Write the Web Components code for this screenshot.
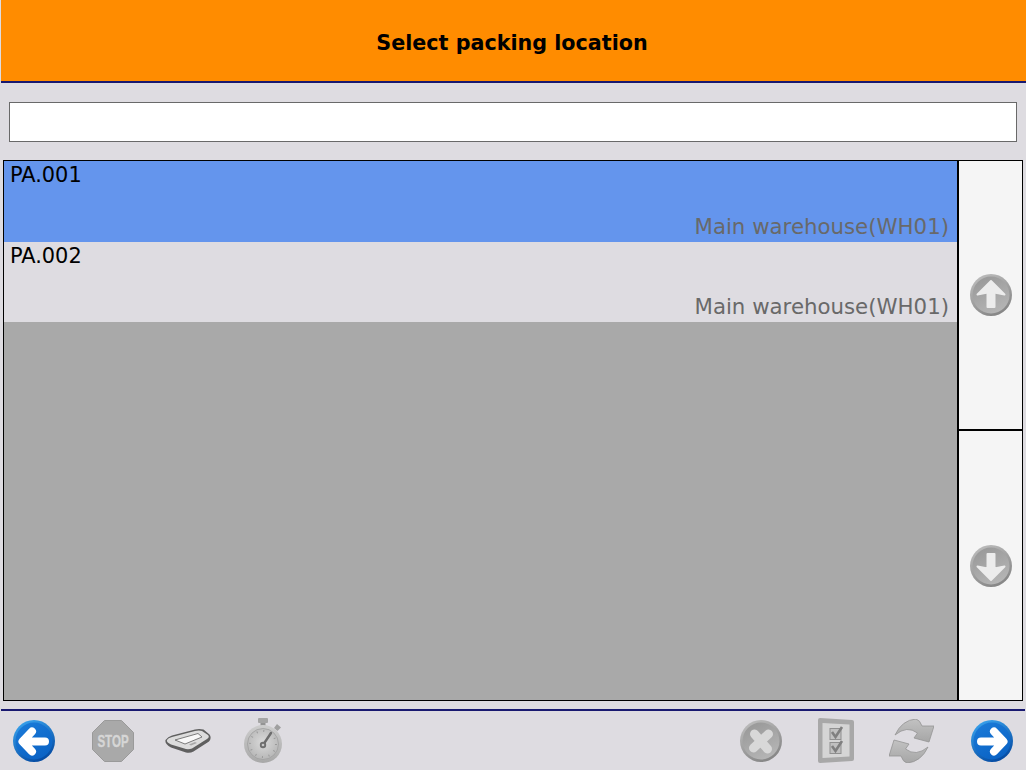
<!DOCTYPE html>
<html>
<head>
<meta charset="utf-8">
<title>Select packing location</title>
<style>
  html, body { margin: 0; padding: 0; background: #dedce1; }
  body { width: 1026px; height: 770px; overflow: hidden; font-family: "DejaVu Sans", sans-serif; }
</style>
</head>
<body>
<pack-screen title-text="Select packing location">
  <loc-row selected code="PA.001" place="Main warehouse(WH01)"></loc-row>
  <loc-row code="PA.002" place="Main warehouse(WH01)"></loc-row>
</pack-screen>

<script>
  class LocRow extends HTMLElement {
    constructor() {
      super();
      this.shadowDOM = this.attachShadow({mode: 'open'});
    }

    connectedCallback() {
      this.shadowDOM.innerHTML = `
        <style>
          :host {
            display: flex;
            flex-direction: column;
            justify-content: space-between;
            box-sizing: border-box;
            height: 80px;
            padding: 2px 8px 3px 6px;
            background: #dedce1;
            line-height: 24px;
            color: #000;
          }
          :host([selected]) { background: #6495ed; height: 81px; }
          .code { font-size: 20.9px; }
          .place { text-align: right; color: #696969; font-size: 21.3px; }
        </style>
        <div class="code">${this.getAttribute('code')}</div>
        <div class="place">${this.getAttribute('place')}</div>
      `;
    }
  }

  class RoundIcon extends HTMLElement {
    constructor() {
      super();
      this.shadowDOM = this.attachShadow({mode: 'open'});
    }

    connectedCallback() {
      const kind = this.getAttribute('kind');
      const blue = this.hasAttribute('blue');
      const id = 'g' + kind;
      const outer = blue
        ? '<stop offset="0" stop-color="#3aa4ee"/><stop offset="1" stop-color="#0348a0"/>'
        : '<stop offset="0" stop-color="#bdbdbd"/><stop offset="1" stop-color="#848484"/>';
      const inner = blue
        ? '<stop offset="0" stop-color="#1a7ad8"/><stop offset="1" stop-color="#0a62c4"/>'
        : '<stop offset="0" stop-color="#989898"/><stop offset="1" stop-color="#b6b6b6"/>';
      const shapes = {
        left: '<path d="M19 11.5 L9.5 21.5 L19 31.5 M10 21.5 H32" fill="none" stroke="#fff" stroke-width="8" stroke-linecap="round" stroke-linejoin="round"/>',
        right: '<path d="M23 11.5 L32.5 21.5 L23 31.5 M32 21.5 H10" fill="none" stroke="#fff" stroke-width="8" stroke-linecap="round" stroke-linejoin="round"/>',
        up: '<path d="M21 7 L7.500 20.500 L17.500 18.500 V33 H24.500 V18.500 L34.500 20.500 Z" fill="#ececec" stroke="#ececec" stroke-width="2" stroke-linejoin="round"/>',
        down: '<path d="M21 35 L7.500 21.500 L17.500 23.500 V9 H24.500 V23.500 L34.500 21.500 Z" fill="#ececec" stroke="#ececec" stroke-width="2" stroke-linejoin="round"/>',
        cross: '<path d="M14.500 14 L27.500 29 M28.500 14 L13.500 28" fill="none" stroke="#d8d8d8" stroke-width="9" stroke-linecap="round"/>'
      };
      this.shadowDOM.innerHTML = `
        <style>
          :host { display: block; width: 42px; height: 42px; line-height: 0; }
        </style>
        <svg width="42" height="42" viewBox="0 0 42 42">
          <defs>
            <linearGradient id="${id}o" x1="0.2" y1="0" x2="0.7" y2="1">${outer}</linearGradient>
            <linearGradient id="${id}i" x1="0.2" y1="0" x2="0.7" y2="1">${inner}</linearGradient>
          </defs>
          <circle cx="21" cy="21" r="21" fill="url(#${id}o)"/>
          <circle cx="21" cy="21" r="18.5" fill="url(#${id}i)"/>
          ${shapes[kind]}
        </svg>
      `;
    }
  }

  class ToolIcon extends HTMLElement {
    constructor() {
      super();
      this.shadowDOM = this.attachShadow({mode: 'open'});
    }

    connectedCallback() {
      const art = {
        stop: `<svg width="42" height="42" viewBox="0 0 42 42">
            <path d="M12.5 .5 H29.5 L41.5 12.5 V29.5 L29.5 41.5 H12.5 L.5 29.5 V12.5 Z" fill="#a9a9a9" stroke="#9a9a9a"/>
            <text transform="translate(21 27) scale(.7 1)" text-anchor="middle" font-family="'Liberation Sans', sans-serif" font-weight="bold" font-size="16.5" fill="#d6d6d6" stroke="#d6d6d6" stroke-width=".4">STOP</text>
          </svg>`,
        pad: `<svg width="46" height="24" viewBox="0 0 46 24">
            <path d="M.5 11 Q3 7.500 7 6.500 L30 .5 Q34 -.5 38.500 .5 L44.500 5.500 Q47 9 44 12.500 L28.500 22.500 Q25 24.500 21 23.500 L6 18.500 Q-.5 15 .5 11 Z" fill="#5f5f5f"/>
            <path d="M2 11 Q3 9 7 8 L30 2 Q34 1 37 2 L43 6 Q45 8 42 10 L27 19.500 Q24 20.500 21 20 L6 15.500 Q1 13 2 11 Z" fill="#dcdcdc"/>
            <path d="M10 11 L33 4.500 L37 8 L20 15 Z" fill="#f8f8f8" stroke="#6e6e6e" stroke-width=".9"/>
            <path d="M24 15.500 L30 13 L32 14 L26 16.500 Z" fill="#a8a8a8"/>
          </svg>`,
        watch: `<svg width="38" height="45" viewBox="0 0 38 45">
            <defs><linearGradient id="wg" x1="0" y1="0" x2="0" y2="1"><stop offset="0" stop-color="#cdcdcd"/><stop offset="1" stop-color="#a8a8a8"/></linearGradient>
            <radialGradient id="wd" cx=".5" cy=".45" r=".6"><stop offset="0" stop-color="#dadada"/><stop offset="1" stop-color="#b4b4b4"/></radialGradient></defs>
            <rect x="14" y="0" width="10" height="5" rx="1" fill="#a5a5a5"/>
            <rect x="16.500" y="5" width="5" height="5" fill="#949494"/>
            <path d="M30 10 L33 6 L37 9.500 L33.500 13 Z" fill="#a0a0a0"/>
            <circle cx="19" cy="26" r="19" fill="url(#wg)"/>
            <circle cx="19" cy="26" r="15.500" fill="url(#wd)" stroke="#a0a0a0" stroke-width=".8"/>
            <circle cx="19" cy="26" r="13" fill="none" stroke="#9a9a9a" stroke-width="2" stroke-dasharray="1 5.800"/>
            <path d="M19 27 L27 15" stroke="#6c6c6c" stroke-width="2.400" stroke-linecap="round"/>
            <circle cx="19" cy="27" r="3.200" fill="#6f6f6f"/>
            <circle cx="19" cy="27" r="1.300" fill="#c8c8c8"/>
          </svg>`,
        check: `<svg width="36" height="45" viewBox="0 0 36 45">
            <path d="M2 0 L34 2 Q36 2 36 4 V41 Q36 43 34 43 L2 45 Q0 45 0 43 V2 Q0 0 2 0 Z" fill="#a8a8a8"/>
            <path d="M4.500 5 L31.500 6.500 V38.500 L4.500 40 Z" fill="#d5d5d5"/>
            <rect x="12" y="10.500" width="11" height="11" fill="#c0c0c0" stroke="#909090"/>
            <rect x="12" y="24.500" width="11" height="11" fill="#c0c0c0" stroke="#909090"/>
            <path d="M14 14 L17.500 19 L24 9 M14 28 L17.500 33 L24 23" fill="none" stroke="#7f7f7f" stroke-width="2.600"/>
          </svg>`,
        sync: `<svg width="45" height="44" viewBox="0 0 45 44">
            <defs><linearGradient id="sg" x1="0" y1="0" x2="0" y2="1"><stop offset="0" stop-color="#c2c2c2"/><stop offset="1" stop-color="#a6a6a6"/></linearGradient></defs>
            <path d="M6 16 Q13 1 27 0 Q31 1 33 7 L45 7 L40 23 L25 19 L28.500 14 Q18 6 6 16 Z" fill="url(#sg)" stroke="#949494" stroke-width=".8" stroke-linejoin="round"/>
            <path d="M39 28 Q32 43 18 44 Q14 43 12 37 L0 37 L5 21 L20 25 L16.500 30 Q27 38 39 28 Z" fill="url(#sg)" stroke="#949494" stroke-width=".8" stroke-linejoin="round"/>
          </svg>`
      };
      this.shadowDOM.innerHTML = `
        <style>
          :host { display: block; line-height: 0; }
        </style>
        ${art[this.getAttribute('kind')]}
      `;
    }
  }

  class PackScreen extends HTMLElement {
    constructor() {
      super();
      this.shadowDOM = this.attachShadow({mode: 'open'});
    }

    connectedCallback() {
      this.shadowDOM.innerHTML = `
        <style>
          * { box-sizing: border-box; }
          :host { display: flex; flex-direction: column; width: 1026px; height: 770px; }
          header {
            height: 83px;
            margin: 0 0 0 1px;
            background: #ff8c00;
            border-bottom: 2px solid #191970;
            display: flex;
            align-items: center;
            justify-content: center;
            padding: 4px 3px 0 0;
            font-size: 20.7px;
            font-weight: bold;
            color: #000;
          }
          .search {
            height: 40px;
            margin: 19px 9px 18px 9px;
            background: #fff;
            border: 1px solid #696969;
          }
          .main {
            display: flex;
            height: 541px;
            margin: 0 3px 0 3px;
            border: 1px solid #000;
            background: #f5f5f5;
          }
          .list { flex: 1; background: #a9a9a9; }
          .scroll {
            width: 65px;
            border-left: 2px solid #000;
            display: grid;
            grid-template-rows: 268px 271px;
          }
          .scroll div { display: flex; align-items: center; justify-content: center; }
          .scroll div + div { border-top: 2px solid #000; }
          footer {
            margin: 8px 1px 0 1px;
            height: 61px;
            border-top: 2px solid #191970;
            display: flex;
            align-items: center;
            padding: 0 12px 0 12px;
          }
          .left, .right { display: flex; align-items: center; }
          .right { margin-left: auto; }
        </style>
        <header>${this.getAttribute('title-text')}</header>
        <div class="search"></div>
        <div class="main">
          <div class="list"><slot></slot></div>
          <div class="scroll">
            <div><round-icon kind="up"></round-icon></div>
            <div><round-icon kind="down"></round-icon></div>
          </div>
        </div>
        <footer>
          <div class="left">
            <round-icon kind="left" blue></round-icon>
            <tool-icon kind="stop" style="margin-left:37px"></tool-icon>
            <tool-icon kind="pad" style="margin-left:31px"></tool-icon>
            <tool-icon kind="watch" style="margin-left:33px"></tool-icon>
          </div>
          <div class="right">
            <round-icon kind="cross"></round-icon>
            <tool-icon kind="check" style="margin-left:36px"></tool-icon>
            <tool-icon kind="sync" style="margin-left:35px"></tool-icon>
            <round-icon kind="right" blue style="margin-left:37px"></round-icon>
          </div>
        </footer>
      `;
    }
  }

  customElements.define('loc-row', LocRow);
  customElements.define('round-icon', RoundIcon);
  customElements.define('tool-icon', ToolIcon);
  customElements.define('pack-screen', PackScreen);
</script>
</body>
</html>
